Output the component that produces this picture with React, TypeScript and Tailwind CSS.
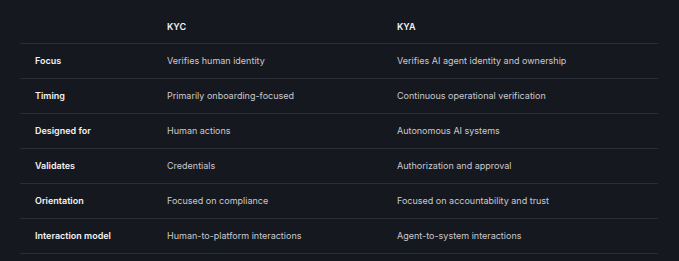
import React from "react";

const rows: [string, string, string][] = [
  ["Focus", "Verifies human identity", "Verifies AI agent identity and ownership"],
  ["Timing", "Primarily onboarding-focused", "Continuous operational verification"],
  ["Designed for", "Human actions", "Autonomous AI systems"],
  ["Validates", "Credentials", "Authorization and approval"],
  ["Orientation", "Focused on compliance", "Focused on accountability and trust"],
  ["Interaction model", "Human-to-platform interactions", "Agent-to-system interactions"],
];

export default function App() {
  return (
    <div
      className="w-[679px] h-[261px] bg-[#16181f] pt-[10px] pl-[20px] pr-[21px] overflow-hidden"
      style={{ fontFamily: "Inter, 'Noto Sans', sans-serif" }}
    >
      <div className="grid grid-cols-[147px_230px_1fr] h-[34px] items-center border-b border-[#2a2d35] text-[9px] font-semibold text-[#f2f2f4]">
        <div className="pl-[15px]"></div>
        <div>KYC</div>
        <div>KYA</div>
      </div>
      {rows.map(([a, b, c]) => (
        <div
          key={a}
          className="grid grid-cols-[147px_230px_1fr] h-[35px] items-center border-b border-[#2a2d35] text-[9px]"
        >
          <div className="pl-[15px] font-semibold text-[#f2f2f4]">{a}</div>
          <div className="text-[#c9cacf]">{b}</div>
          <div className="text-[#c9cacf]">{c}</div>
        </div>
      ))}
    </div>
  );
}
